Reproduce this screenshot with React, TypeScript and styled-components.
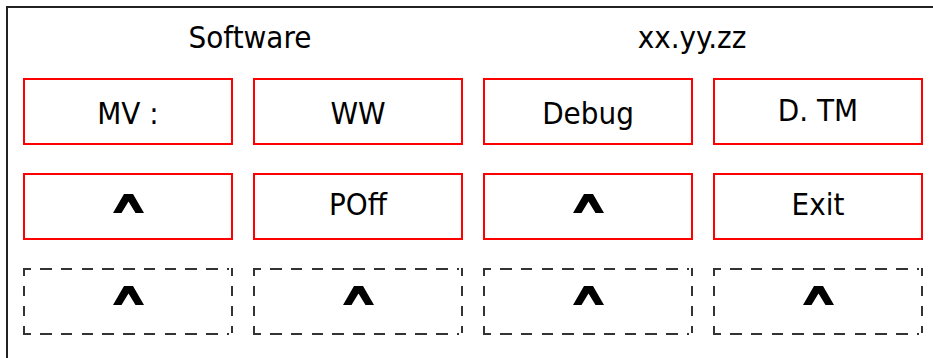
import React from 'react'
import styled, { createGlobalStyle, css } from 'styled-components'

/**
 * global
 */
const GlobalStyle = createGlobalStyle`
  html, body {
    margin: 0;
    padding: 0;
    background: #fff;
    overflow: hidden;
  }
  body {
    font-family: 'DejaVu Sans Condensed', 'DejaVu Sans', sans-serif;
    color: #000;
  }
`

/**
 * styled
 */
const Frame = styled.div`
  margin: 6px 0 0 6px;
  min-height: 100vh;
  border-top: 2px solid #222;
  border-left: 2px solid #222;
`

const Header = styled.div`
  display: grid;
  grid-template-columns: 484px 400px;
  margin-top: 11px;
  height: 36px;
`

const HeaderText = styled.div`
  font-size: 31px;
  line-height: 36px;
  text-align: center;
`

const ButtonGrid = styled.div`
  display: grid;
  grid-template-columns: repeat(4, 210px);
  grid-auto-rows: 67px;
  column-gap: 20px;
  row-gap: 28px;
  margin-top: 23px;
  padding-left: 15px;
`

const dashed = css`
  background:
    repeating-linear-gradient(90deg, #333 0 11.5px, transparent 11.5px 20.75px) -3.75px 0 / 100% 2px no-repeat,
    repeating-linear-gradient(90deg, #333 0 11.5px, transparent 11.5px 20.75px) -3.75px 100% / 100% 2px no-repeat,
    repeating-linear-gradient(180deg, #333 0 10px, transparent 10px 20px) 0 -2px / 2px 100% no-repeat,
    repeating-linear-gradient(180deg, #333 0 10px, transparent 10px 20px) 100% -2px / 2px 100% no-repeat;
`

const Cell = styled.div<{ $dashed?: boolean; $top?: number; $bottom?: number }>`
  box-sizing: border-box;
  display: flex;
  align-items: center;
  justify-content: center;
  padding-top: ${(p) => p.$top || 0}px;
  padding-bottom: ${(p) => p.$bottom || 0}px;
  ${(p) => (p.$dashed ? dashed : css`border: 2px solid #ff0000;`)}
`

const Label = styled.span`
  font-size: 31px;
  line-height: 36px;
  white-space: nowrap;
`

const Caret = styled.svg`
  display: block;
  width: 31px;
  height: 19px;
`

const CaretIcon = () => (
  <Caret viewBox="0 0 31 19">
    <polygon points="0,19 11,0 20,0 31,19 22.5,19 15.5,7.5 8.5,19" fill="#000" />
  </Caret>
)

type Item = { label?: string; dashed?: boolean; top?: number; bottom?: number }

const items: Item[] = [
  { label: 'MV :', top: 3 },
  { label: 'WW', top: 3 },
  { label: 'Debug', top: 3 },
  { label: 'D. TM', bottom: 4 },
  { bottom: 6 },
  { label: 'POff', bottom: 6 },
  { bottom: 6 },
  { label: 'Exit', bottom: 6 },
  { dashed: true, bottom: 12 },
  { dashed: true, bottom: 12 },
  { dashed: true, bottom: 12 },
  { dashed: true, bottom: 12 },
]

const App: React.FC = () => {
  return (
    <>
      <GlobalStyle />
      <Frame>
        <Header>
          <HeaderText>Software</HeaderText>
          <HeaderText>xx.yy.zz</HeaderText>
        </Header>
        <ButtonGrid>
          {items.map((item, index) => (
            <Cell key={index} $dashed={item.dashed} $top={item.top} $bottom={item.bottom}>
              {item.label ? <Label>{item.label}</Label> : <CaretIcon />}
            </Cell>
          ))}
        </ButtonGrid>
      </Frame>
    </>
  )
}

export default App
